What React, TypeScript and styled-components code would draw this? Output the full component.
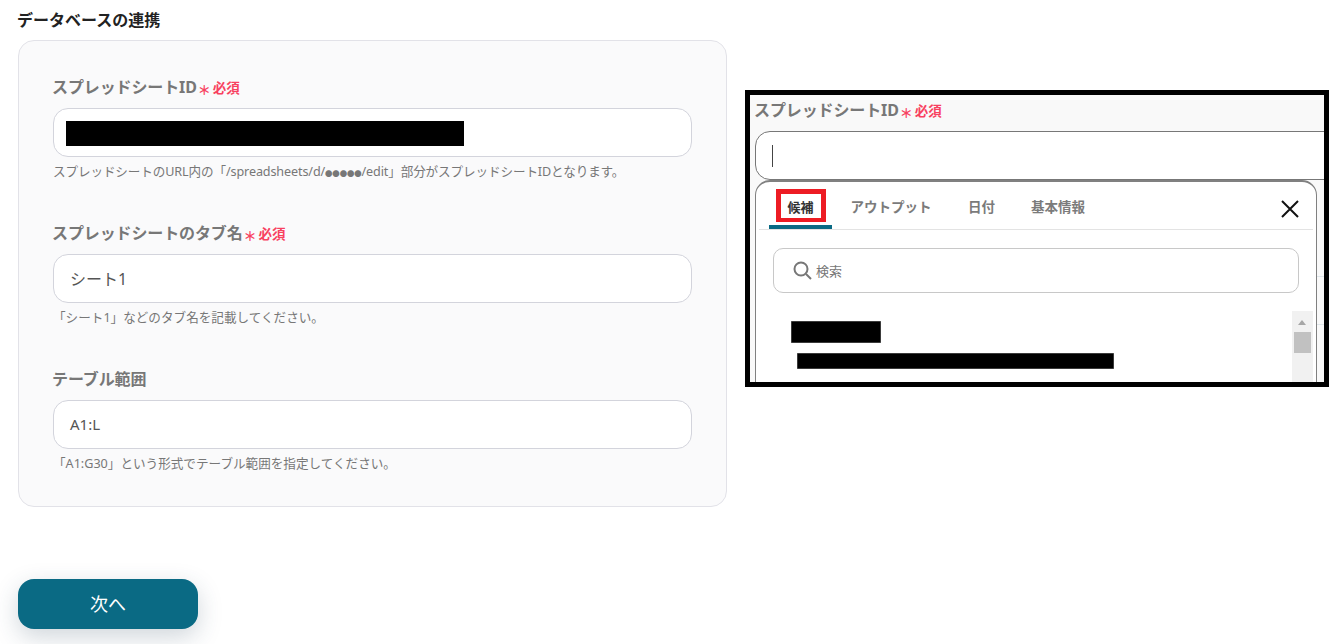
import React from "react";
import styled, { createGlobalStyle } from "styled-components";

const Global = createGlobalStyle`
  html, body { margin: 0; padding: 0; background: #fff; }
  body { font-family: "Noto Sans", "Noto Sans CJK JP", sans-serif; width: 1343px; height: 644px; overflow: hidden; }
`;

const Page = styled.div`
  display: flex;
  align-items: flex-start;
  padding: 10px 0 0 18px;
  gap: 18px;
`;
const LeftColumn = styled.div`
  width: 709px;
  display: flex;
  flex-direction: column;
`;
const Title = styled.h2`
  margin: 0;
  height: 30px;
  font-size: 16px;
  line-height: 20px;
  font-weight: 700;
  color: #222;
  margin-left: -1px;
`;
const Card = styled.section`
  box-sizing: border-box;
  height: 467px;
  border: 1px solid #e2e2e8;
  border-radius: 16px;
  background: #fafafb;
  padding: 31px 34px 0;
  display: flex;
  flex-direction: column;
  gap: 37px;
`;
const Field = styled.div`
  display: flex;
  flex-direction: column;
`;
const LabelRow = styled.div`
  display: flex;
  align-items: center;
  height: 28px;
  margin: 0 0 8px -1px;
  font-size: 16px;
  letter-spacing: -0.12px;
  font-weight: 700;
  color: #777;
  white-space: nowrap;
`;
const Mark = styled.span`
  color: #f8415f;
  font-size: 13px;
  font-weight: 700;
  position: relative;
  top: 3px;
  left: 1px;
  letter-spacing: 0;
`;
const Required = styled.span`
  color: #f8415f;
  font-size: 13.5px;
  font-weight: 700;
  letter-spacing: 0;
  margin-left: 3px;
  position: relative;
  top: 1px;
`;
const InputBox = styled.div<{ $size?: number }>`
  box-sizing: border-box;
  height: 49px;
  border: 1px solid #d3d4dc;
  border-radius: 15px;
  background: #fff;
  padding: 0 16px 2px;
  display: flex;
  align-items: center;
  font-size: ${(p) => p.$size ?? 15}px;
  color: #555;
`;
const Redaction = styled.div<{ $w: number; $h: number }>`
  width: ${(p) => p.$w}px;
  height: ${(p) => p.$h}px;
  background: #000;
  flex: none;
`;
const InputRedaction = styled(Redaction)`
  margin: 4px 0 0 -4px;
`;
const Help = styled.p<{ $tight?: boolean }>`
  margin: 6px 0 0;
  height: 18px;
  font-size: 12.6px;
  letter-spacing: ${(p) => (p.$tight ? "-0.12px" : "0")};
  line-height: 18px;
  color: #777;
  white-space: nowrap;
`;
const Dots = styled.span`
  font-size: 7.4px;
`;
const NextButton = styled.button`
  margin-top: 72px;
  width: 180px;
  height: 50px;
  border: 0;
  border-radius: 16px;
  background: #0a6a84;
  color: #fff;
  font: 400 18px "Noto Sans", "Noto Sans CJK JP", sans-serif;
  padding: 0 0 3px;
  box-shadow: 0 8px 24px rgba(40, 70, 90, 0.22);
`;
const Shot = styled.div`
  box-sizing: border-box;
  margin-top: 80px;
  width: 584px;
  height: 297px;
  border: 5px solid #000;
  background: #f9f9f9;
  padding-left: 5px;
  overflow: hidden;
`;
const ShotLabel = styled(LabelRow)`
  height: 28px;
  margin-bottom: 8px;
`;
const FocusInput = styled.div`
  box-sizing: border-box;
  width: 640px;
  height: 49px;
  border: 1px solid #777;
  border-radius: 15px;
  background: #fff;
  display: flex;
  align-items: center;
  padding-left: 16px;
`;
const Caret = styled.div`
  width: 1px;
  height: 22px;
  background: #444;
`;
const PopupRow = styled.div`
  display: flex;
  align-items: stretch;
  height: 203px;
`;
const Popup = styled.div`
  box-sizing: border-box;
  width: 562px;
  height: 220px;
  flex: none;
  border: 1px solid #808080;
  border-top: 2px solid #808080;
  border-radius: 15px 15px 0 0;
  background: #fff;
  padding: 0 3px;
`;
const BackStrip = styled.div`
  flex: 1;
  display: flex;
  flex-direction: column;
  padding-top: 96px;
  background: #f9f9f9;
`;
const BackLine = styled.div`
  height: 1px;
  margin-bottom: 47px;
  background: #dfe6ea;
`;
const TabBar = styled.div`
  position: relative;
  height: 48px;
  box-sizing: border-box;
  border-bottom: 1px solid #e3e3e3;
  display: flex;
  align-items: flex-end;
  padding-left: 10px;
`;
const Tab = styled.div<{ $active?: boolean; $w: number }>`
  width: ${(p) => p.$w}px;
  height: 48px;
  box-sizing: border-box;
  display: flex;
  align-items: center;
  justify-content: center;
  padding-top: 1px;
  font-size: 13.5px;
  font-weight: 700;
  color: ${(p) => (p.$active ? "#333" : "#7b7b7b")};
  white-space: nowrap;
  position: relative;
  ${(p) => (p.$active ? "border-bottom: 4px solid #0a6a84; border-radius: 4px 4px 0 0; padding-top: 6px;" : "")}
`;
const ActiveText = styled.span`
  font-size: 13px;
`;
const RedBox = styled.div`
  position: absolute;
  left: 7px;
  top: 8px;
  width: 50px;
  height: 33px;
  box-sizing: border-box;
  border: 5px solid #ed1c24;
  border-bottom-width: 4px;
`;
const Close = styled.div`
  position: absolute;
  right: 14px;
  top: 18px;
  width: 18px;
  height: 18px;
  color: #111;
`;
const SearchBox = styled.div`
  box-sizing: border-box;
  margin: 18px 0 0 14px;
  width: 526px;
  height: 45px;
  border: 1px solid #c8c8c8;
  border-radius: 10px;
  display: flex;
  align-items: center;
  padding-left: 19px;
  gap: 4px;
  font-size: 13px;
  color: #777;
`;
const ListArea = styled.div`
  position: relative;
  height: 72px;
  margin-top: 18px;
`;
const Scrollbar = styled.div`
  position: absolute;
  right: 0;
  top: 0;
  width: 21px;
  height: 72px;
  background: #f1f1f1;
`;
const Arrow = styled.div`
  position: absolute;
  left: 6px;
  top: 9px;
  width: 0;
  height: 0;
  border-left: 4.5px solid transparent;
  border-right: 4.5px solid transparent;
  border-bottom: 5px solid #a6a6a6;
`;
const Thumb = styled.div`
  position: absolute;
  left: 2px;
  top: 21px;
  width: 17px;
  height: 21px;
  background: #c1c1c1;
`;
const ListItems = styled.div`
  display: flex;
  flex-direction: column;
  padding: 10px 0 0 32px;
`;
const Name = styled(Redaction)`
  box-shadow: inset 0 0 0 0.5px #777;
`;
const Value = styled(Name)`
  margin: 10px 0 0 6px;
`;

const Req = () => (
  <>
    <Mark>＊</Mark>
    <Required>必須</Required>
  </>
);

export default function App() {
  return (
    <>
      <Global />
      <Page>
        <LeftColumn>
          <Title>データベースの連携</Title>
          <Card>
            <Field>
              <LabelRow>スプレッドシートID<Req /></LabelRow>
              <InputBox><InputRedaction $w={398} $h={25} /></InputBox>
              <Help $tight>スプレッドシートのURL内の「/spreadsheets/d/<Dots>●●●●●</Dots>/edit」部分がスプレッドシートIDとなります。</Help>
            </Field>
            <Field>
              <LabelRow>スプレッドシートのタブ名<Req /></LabelRow>
              <InputBox $size={16}>シート1</InputBox>
              <Help>「シート1」などのタブ名を記載してください。</Help>
            </Field>
            <Field>
              <LabelRow>テーブル範囲</LabelRow>
              <InputBox>A1:L</InputBox>
              <Help>「A1:G30」という形式でテーブル範囲を指定してください。</Help>
            </Field>
          </Card>
          <NextButton>次へ</NextButton>
        </LeftColumn>
        <Shot>
          <ShotLabel>スプレッドシートID<Req /></ShotLabel>
          <FocusInput><Caret /></FocusInput>
          <PopupRow>
            <Popup>
              <TabBar>
                <Tab $active $w={63}><ActiveText>候補</ActiveText><RedBox /></Tab>
                <Tab $w={118}>アウトプット</Tab>
                <Tab $w={63}>日付</Tab>
                <Tab $w={90}>基本情報</Tab>
                <Close>
                  <svg width="18" height="18" viewBox="0 0 18 18" fill="none" stroke="currentColor" strokeWidth="2">
                    <path d="M1 1 L17 17 M17 1 L1 17" />
                  </svg>
                </Close>
              </TabBar>
              <SearchBox>
                <svg width="19" height="19" viewBox="0 0 19 19" fill="none" stroke="#777" strokeWidth="2">
                  <circle cx="8" cy="8" r="6.5" />
                  <path d="M13 13 L18 18" />
                </svg>
                検索
              </SearchBox>
              <ListArea>
                <ListItems>
                  <Name $w={90} $h={22} />
                  <Value $w={317} $h={16} />
                </ListItems>
                <Scrollbar><Arrow /><Thumb /></Scrollbar>
              </ListArea>
            </Popup>
            <BackStrip><BackLine /><BackLine /></BackStrip>
          </PopupRow>
        </Shot>
      </Page>
    </>
  );
}
